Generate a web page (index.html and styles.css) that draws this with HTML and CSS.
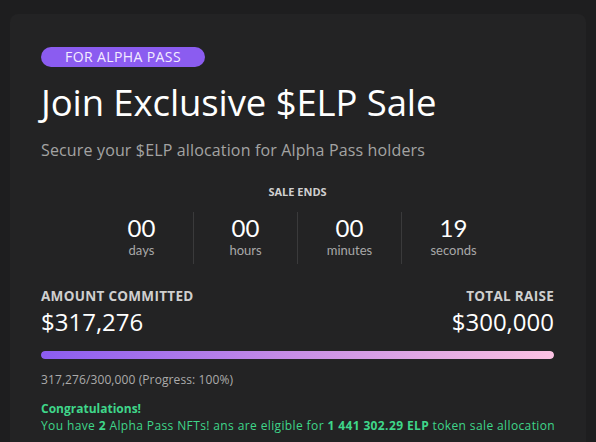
FILE: index.html
```html
<!DOCTYPE html>
<html>
<head>
<meta charset="utf-8">
<link rel="stylesheet" href="styles.css">
</head>
<body>
<div class="card">
  <div class="badge">FOR ALPHA PASS</div>
  <h1 class="title">Join Exclusive $ELP Sale</h1>
  <p class="subtitle">Secure your $ELP allocation for Alpha Pass holders</p>
  <div class="ends">SALE ENDS</div>
  <div class="countdown">
    <div class="unit"><div class="num">00</div><div class="lbl">days</div></div>
    <div class="unit"><div class="num">00</div><div class="lbl">hours</div></div>
    <div class="unit"><div class="num">00</div><div class="lbl">minutes</div></div>
    <div class="unit"><div class="num">19</div><div class="lbl">seconds</div></div>
  </div>
  <div class="stats">
    <div class="stat">
      <div class="stat-label">AMOUNT COMMITTED</div>
      <div class="stat-value">$317,276</div>
    </div>
    <div class="stat right">
      <div class="stat-label">TOTAL RAISE</div>
      <div class="stat-value">$300,000</div>
    </div>
  </div>
  <div class="bar"><div class="fill" style="width:100%"></div></div>
  <div class="progress">317,276/300,000 (Progress: 100%)</div>
  <div class="congrats">
    <div class="c-title">Congratulations!</div>
    <div class="c-text">You have <b>2</b> Alpha Pass NFTs! ans are eligible for <b>1 441 302.29 ELP</b> token sale allocation</div>
  </div>
</div>
</body>
</html>
```
FILE: styles.css
```css
html, body {
  margin: 0;
  padding: 0;
  background: #1e1e1f;
  height: 100%;
  overflow: hidden;
}
body {
  font-family: "Open Sans", "Liberation Sans", sans-serif;
  color: #fff;
}
.card {
  margin: 14px 0 0 10px;
  width: 576px;
  height: 428px;
  box-sizing: border-box;
  background: #232324;
  border-radius: 8px 8px 0 0;
  padding: 31px 32px 0 31px;
}
.badge {
  display: inline-block;
  height: 20px;
  line-height: 20px;
  padding: 0 24px;
  border-radius: 10px;
  background: #8b5cf0;
  color: #f3ecff;
  font-size: 14px;
  font-weight: 500;
  letter-spacing: 0.4px;
}
.title {
  margin: 12px 0 0;
  font-size: 36.5px;
  font-weight: 400;
  line-height: 46px;
  letter-spacing: -0.1px;
}
.subtitle {
  margin: 14px 0 0;
  font-size: 16px;
  line-height: 22px;
  color: #a3a3a3;
  letter-spacing: 0.15px;
}
.ends {
  margin-top: 24px;
  text-align: center;
  font-size: 11px;
  font-weight: 700;
  color: #d0d0d0;
  line-height: 14px;
}
.countdown {
  display: flex;
  justify-content: center;
  margin-top: 13px;
}
.unit {
  width: 103px;
  text-align: center;
  border-left: 1px solid #3a3a3b;
  padding: 2px 0 6px;
}
.unit:first-child {
  border-left: none;
}
.num {
  font-family: Lato, "Liberation Sans", sans-serif;
  font-size: 24px;
  line-height: 28px;
}
.lbl {
  font-family: Lato, "Liberation Sans", sans-serif;
  font-size: 13px;
  line-height: 16px;
  color: #a8a8a8;
}
.stats {
  display: flex;
  justify-content: space-between;
  margin-top: 24px;
}
.right {
  text-align: right;
}
.stat-label {
  font-size: 13.5px;
  font-weight: 700;
  color: #cfcfcf;
  line-height: 16px;
  letter-spacing: 0.3px;
}
.stat-value {
  font-size: 24px;
  line-height: 30px;
  margin-top: 3px;
}
.bar {
  margin-top: 14px;
  height: 8px;
  border-radius: 4px;
  background: #3a3a3b;
  overflow: hidden;
}
.fill {
  height: 100%;
  border-radius: 4px;
  background: linear-gradient(90deg, #8b5cf0, #c88ee6 50%, #fbc2e2);
}
.progress {
  margin-top: 14px;
  font-size: 12px;
  line-height: 14px;
  color: #ababab;
  letter-spacing: 0.1px;
}
.congrats {
  margin-top: 13px;
  color: #3fd68a;
  font-size: 12px;
  line-height: 17px;
}
.c-title {
  font-weight: 700;
}
.c-text {
  white-space: nowrap;
  letter-spacing: 0.38px;
}
.c-text b {
  font-weight: 700;
}
```
